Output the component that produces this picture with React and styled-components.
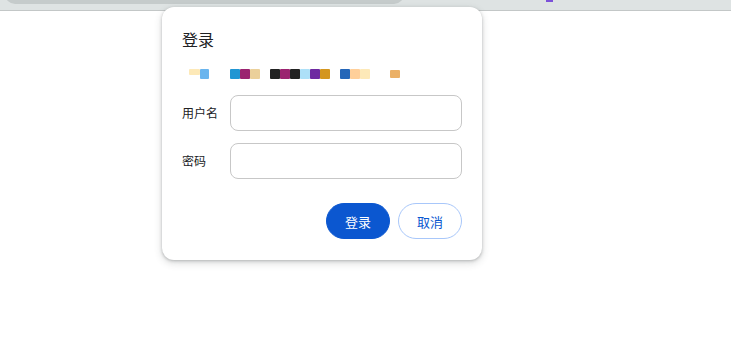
import React from "react";
import styled, { createGlobalStyle } from "styled-components";

const Global = createGlobalStyle`
  html, body { margin: 0; padding: 0; background: #ffffff; }
  body { font-family: "Noto Sans CJK SC", "Noto Sans", Roboto, sans-serif; }
  * { box-sizing: border-box; }
`;

const Page = styled.div`
  position: relative;
  width: 731px;
  height: 356px;
  overflow: hidden;
  background: #ffffff;
`;

const TopBar = styled.div`
  display: flex;
  align-items: flex-start;
  height: 11px;
  padding-left: 5px;
  background: #dee3e3;
  border-bottom: 1px solid #c3c7c7;
  overflow: hidden;
`;

const Omnibox = styled.div`
  width: 399px;
  height: 20px;
  margin-top: -16px;
  border-radius: 10px;
  background: #c5cbcb;
`;

const Mark = styled.div`
  width: 7px;
  height: 2px;
  margin-left: 142px;
  background: #7b51d9;
`;

const Dialog = styled.div`
  position: absolute;
  left: 162px;
  top: 7px;
  width: 320px;
  padding: 23px 20px 21px 20px;
  background: #ffffff;
  border-radius: 12px;
  box-shadow: 0 1px 3px rgba(60, 64, 67, 0.3), 0 3px 7px 1px rgba(60, 64, 67, 0.15);
  display: flex;
  flex-direction: column;
`;

const Title = styled.div`
  font-size: 16px;
  line-height: 19px;
  color: #202124;
`;

const Origin = styled.svg`
  display: block;
  margin-top: 20px;
  width: 230px;
  height: 10px;
`;

const Field = styled.div`
  display: flex;
  align-items: center;
  margin-top: ${(p) => p.$gap}px;
`;

const Label = styled.div`
  width: 48px;
  font-size: 12px;
  line-height: 16px;
  color: #202124;
`;

const Input = styled.input`
  width: 232px;
  height: 36px;
  border: 1px solid #c7c7c7;
  border-radius: 8px;
  outline: none;
  padding: 0 10px;
  font-size: 13px;
  background: #ffffff;
`;

const Actions = styled.div`
  display: flex;
  justify-content: flex-end;
  gap: 8px;
  margin-top: 24px;
`;

const Button = styled.button`
  width: 64px;
  height: 36px;
  border-radius: 18px;
  font-family: "Noto Sans CJK SC", "Noto Sans", sans-serif;
  font-size: 13px;
  cursor: pointer;
  border: 1px solid ${(p) => (p.$primary ? "#0b57d0" : "#a8c7fa")};
  background: ${(p) => (p.$primary ? "#0b57d0" : "#ffffff")};
  color: ${(p) => (p.$primary ? "#ffffff" : "#0b57d0")};
  padding: 0;
`;

const blocks = [
  { x: 7, y: 0, w: 11, h: 6, c: "#fde9b8" },
  { x: 18, y: 0, w: 9, h: 10, c: "#6ab5ee" },
  { x: 48, y: 0, w: 10, h: 10, c: "#2196d3" },
  { x: 58, y: 0, w: 10, h: 10, c: "#9b2370" },
  { x: 68, y: 0, w: 10, h: 10, c: "#ebd09a" },
  { x: 88, y: 0, w: 10, h: 10, c: "#222222" },
  { x: 98, y: 0, w: 10, h: 10, c: "#9b2370" },
  { x: 108, y: 0, w: 10, h: 10, c: "#222222" },
  { x: 118, y: 0, w: 10, h: 10, c: "#ade0f8" },
  { x: 128, y: 0, w: 10, h: 10, c: "#6e2aa1" },
  { x: 138, y: 0, w: 10, h: 10, c: "#d4961f" },
  { x: 158, y: 0, w: 10, h: 10, c: "#2466b8" },
  { x: 168, y: 0, w: 10, h: 10, c: "#ffcf99" },
  { x: 178, y: 0, w: 10, h: 10, c: "#fde9b8" },
  { x: 208, y: 1, w: 10, h: 8, c: "#ebb066" },
];

export default function App() {
  return (
    <Page>
      <Global />
      <TopBar>
        <Omnibox />
        <Mark />
      </TopBar>
      <Dialog>
        <Title>登录</Title>
        <Origin viewBox="0 0 230 10">
          {blocks.map((b, i) => (
            <rect key={i} x={b.x} y={b.y} width={b.w} height={b.h} fill={b.c} rx="1" />
          ))}
        </Origin>
        <Field $gap={16}>
          <Label>用户名</Label>
          <Input type="text" />
        </Field>
        <Field $gap={12}>
          <Label>密码</Label>
          <Input type="password" />
        </Field>
        <Actions>
          <Button $primary>登录</Button>
          <Button>取消</Button>
        </Actions>
      </Dialog>
    </Page>
  );
}
